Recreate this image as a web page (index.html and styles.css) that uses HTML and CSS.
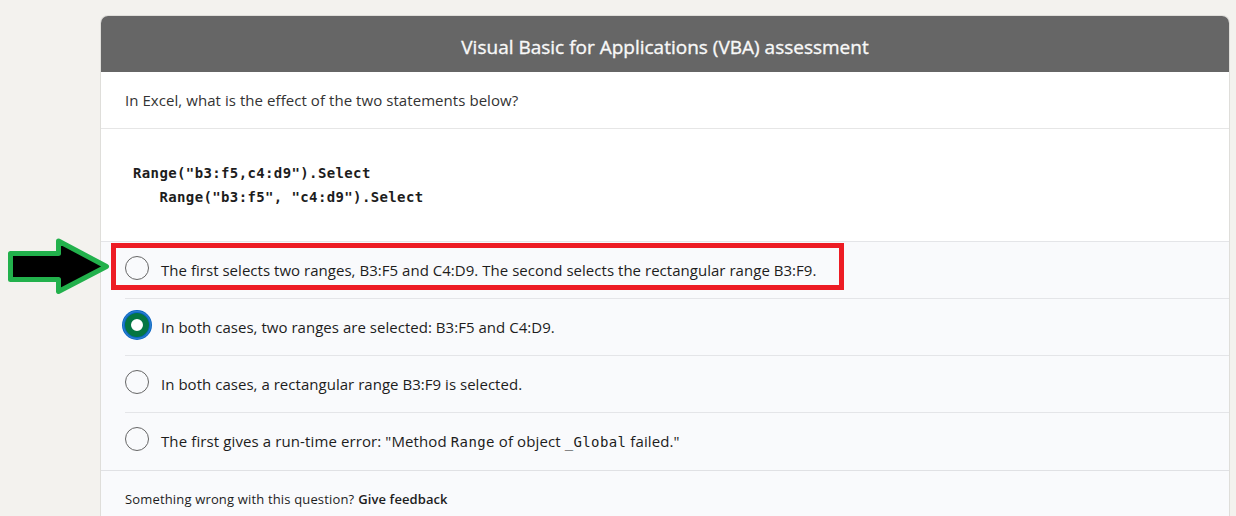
FILE: index.html
```html
<!DOCTYPE html>
<html lang="en">
<head>
<meta charset="utf-8">
<title>Visual Basic for Applications (VBA) assessment</title>
<link rel="stylesheet" href="styles.css">
</head>
<body>
<main class="card">
  <header class="card-header"><h1 class="title">Visual Basic for Applications (VBA) assessment</h1></header>
  <section class="question"><span class="question-text">In Excel, what is the effect of the two statements below?</span></section>
  <pre class="snippet">Range("b3:f5,c4:d9").Select
   Range("b3:f5", "c4:d9").Select</pre>
  <section class="options">
    <label class="option"><span class="radio"></span><span class="label">The first selects two ranges, B3:F5 and C4:D9. The second selects the rectangular range B3:F9.</span></label>
    <label class="option"><span class="radio selected"></span><span class="label">In both cases, two ranges are selected: B3:F5 and C4:D9.</span></label>
    <label class="option"><span class="radio"></span><span class="label">In both cases, a rectangular range B3:F9 is selected.</span></label>
    <label class="option"><span class="radio"></span><span class="label with-code">The first gives a run-time error: "Method <code>Range</code> of object <code>_Global</code> failed."</span></label>
  </section>
  <footer class="feedback"><span class="prompt">Something wrong with this question?</span><a class="feedback-link">Give feedback</a></footer>
</main>
<div class="highlight"></div>
<svg class="arrow" width="112" height="62" viewBox="0 0 112 62"><path d="M10.500 19.500H58.500V7L106.500 32.500L58.500 57.500V45.500H10.500Z" fill="#000" stroke="#22b14c" stroke-width="5" stroke-linejoin="round"/></svg>
</body>
</html>
```
FILE: styles.css
```css
* { box-sizing: border-box; }
body {
  margin: 0;
  height: 516px;
  padding: 15px 6px 0 100px;
  background: #f3f2ee;
  color: #1d1d1d;
  font-family: "Open Sans", "Noto Sans", sans-serif;
  font-size: 15px;
}
.card {
  height: 501px;
  display: flex;
  flex-direction: column;
  border: 1px solid #dfdeda;
  border-bottom: 0;
  border-radius: 8px 8px 0 0;
  overflow: hidden;
  background: #fff;
}
.card-header {
  height: 56px;
  flex: none;
  display: flex;
  align-items: center;
  justify-content: center;
  padding-top: 6px;
  background: #666;
}
.title {
  margin: 0;
  color: #f8f8f8;
  font-size: 19px;
  font-weight: 400;
  line-height: 26px;
  white-space: nowrap;
  -webkit-text-stroke: 0.350px #f8f8f8;
}
.question {
  height: 57px;
  flex: none;
  display: flex;
  align-items: center;
  padding: 0 24px;
  border-bottom: 1px solid #e6e6e6;
  color: #333;
  letter-spacing: 0.060px;
}
.snippet {
  height: 112px;
  flex: none;
  margin: 0;
  padding: 32px 32px 0;
  font: bold 14px/24px "DejaVu Sans Mono", monospace;
  letter-spacing: 0.375px;
}
.options {
  height: 230px;
  flex: none;
  background: #f9fafc;
  border-top: 1px solid #e4e5e8;
  border-bottom: 1px solid #e0e1e4;
}
.option {
  height: 57px;
  margin-left: 24px;
  padding-bottom: 2px;
  display: flex;
  align-items: center;
  gap: 12px;
  border-bottom: 1px solid #e4e5e8;
}
.option:last-child { border-bottom: 0; padding-bottom: 3px; }
.radio {
  width: 24px;
  height: 24px;
  flex: none;
  margin-bottom: 3px;
  border: 1px solid #666;
  border-radius: 50%;
}
.radio.selected {
  border: 6px solid #057642;
  background: #fff;
  box-shadow: 0 0 0 1px #0a66c2, 0 0 0 2px #2f80cf, 0 0 0 3px #0a66c2;
}
.label {
  padding-top: 2px;
  white-space: nowrap;
  line-height: 24px;
  letter-spacing: 0.030px;
}
.label.with-code { letter-spacing: 0.110px; }
.label code {
  font: 14px/20px "DejaVu Sans Mono", monospace;
  letter-spacing: 0.370px;
}
.feedback {
  flex: 1;
  display: flex;
  gap: 4px;
  padding: 18px 24px 0;
  background: #f9fafc;
  font-size: 13px;
  line-height: 20px;
  letter-spacing: 0.160px;
  white-space: nowrap;
}
.feedback-link { font-weight: 600; letter-spacing: 0.080px; }
.highlight {
  position: absolute;
  left: 111px;
  top: 243px;
  width: 733px;
  height: 47px;
  border: 5px solid #ed1c24;
}
.arrow { position: absolute; left: 0; top: 234px; }
```
